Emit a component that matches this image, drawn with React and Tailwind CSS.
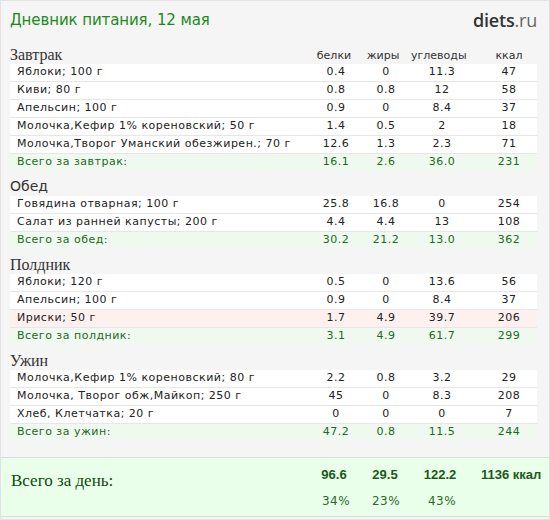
import React from "react";

const sections = [
  {
    title: "Завтрак",
    serif: true,
    rows: [
      ["Яблоки; 100 г", "0.4", "0", "11.3", "47"],
      ["Киви; 80 г", "0.8", "0.8", "12", "58"],
      ["Апельсин; 100 г", "0.9", "0", "8.4", "37"],
      ["Молочка,Кефир 1% кореновский; 50 г", "1.4", "0.5", "2", "18"],
      ["Молочка,Творог Уманский обезжирен.; 70 г", "12.6", "1.3", "2.3", "71"],
    ],
    total: ["Всего за завтрак:", "16.1", "2.6", "36.0", "231"],
  },
  {
    title: "Обед",
    serif: false,
    rows: [
      ["Говядина отварная; 100 г", "25.8", "16.8", "0", "254"],
      ["Салат из ранней капусты; 200 г", "4.4", "4.4", "13", "108"],
    ],
    total: ["Всего за обед:", "30.2", "21.2", "13.0", "362"],
  },
  {
    title: "Полдник",
    serif: true,
    rows: [
      ["Яблоки; 120 г", "0.5", "0", "13.6", "56"],
      ["Апельсин; 100 г", "0.9", "0", "8.4", "37"],
      ["Ириски; 50 г", "1.7", "4.9", "39.7", "206", true],
    ],
    total: ["Всего за полдник:", "3.1", "4.9", "61.7", "299"],
  },
  {
    title: "Ужин",
    serif: true,
    rows: [
      ["Молочка,Кефир 1% кореновский; 80 г", "2.2", "0.8", "3.2", "29"],
      ["Молочка, Творог обж,Майкоп; 250 г", "45", "0", "8.3", "208"],
      ["Хлеб, Клетчатка; 20 г", "0", "0", "0", "7"],
    ],
    total: ["Всего за ужин:", "47.2", "0.8", "11.5", "244"],
  },
];

function Cells({ v }) {
  return (
    <>
      <div className="w-[50px] text-center">{v[1]}</div>
      <div className="w-[50px] text-center">{v[2]}</div>
      <div className="w-[62px] text-center">{v[3]}</div>
      <div className="w-[8px]" />
      <div className="w-[56px] text-center">{v[4]}</div>
    </>
  );
}

function Row({ r }) {
  const pink = r[5];
  return (
    <div
      className={`flex h-[18px] items-center border-b border-[#e6e6e6] ${
        pink ? "bg-[#fff0f0]" : "bg-white"
      } text-[#222]`}
    >
      <div className="flex-1 pl-[7px] whitespace-nowrap">{r[0]}</div>
      <Cells v={r} />
    </div>
  );
}

function Total({ r }) {
  return (
    <div className="flex h-[17px] items-center bg-[#f0f9ef] text-[#1b6a1b]">
      <div className="flex-1 pl-[7px] whitespace-nowrap">{r[0]}</div>
      <Cells v={r} />
    </div>
  );
}

export default function App() {
  return (
    <div
      className="w-[550px] h-[520px] bg-[#f5f5f5] border border-[#e2e2e2] overflow-hidden"
      style={{ fontFamily: "'DejaVu Sans', Verdana, sans-serif" }}
    >
      <div className="flex h-[38px] items-center justify-between pl-[9px] pr-[12px]">
        <div className="text-[15px] text-[#1a8a1a] tracking-[-0.1px] pt-[1px]">
          Дневник питания, 12 мая
        </div>
        <div
          className="text-[18px] text-[#333] tracking-[-0.2px]"
          style={{ fontFamily: "'Open Sans', 'Liberation Sans', sans-serif" }}
        >
          <span className="font-semibold">diets</span>
          <span className="text-[#666]">.ru</span>
        </div>
      </div>
      <div className="pl-[9px] pr-[12px] text-[11px] tracking-[0.5px]">
        {sections.map((s, i) => (
          <div key={i}>
            <div className="flex h-[25px] items-end">
              <div
                className={`flex-1 leading-[18px] text-[#333] tracking-normal ${
                  s.serif ? "text-[16px]" : "text-[14px] pb-[1px]"
                }`}
                style={{
                  fontFamily: s.serif
                    ? "'Liberation Serif', 'Times New Roman', serif"
                    : "'DejaVu Sans', Verdana, sans-serif",
                }}
              >
                {s.title}
              </div>
              {i === 0 && (
                <div className="flex text-[#333] tracking-normal">
                  <div className="w-[50px] text-center pr-[4px]">белки</div>
                  <div className="w-[50px] text-center pr-[6px]">жиры</div>
                  <div className="w-[62px] text-center pr-[10px]">углеводы</div>
                  <div className="w-[8px]" />
                  <div className="w-[56px] text-center">ккал</div>
                </div>
              )}
            </div>
            {s.rows.map((r, j) => (
              <Row key={j} r={r} />
            ))}
            <Total r={s.total} />
          </div>
        ))}
      </div>
      <div className="mt-[16px] h-[60px] bg-[#eaffea] border-y border-[#dcdcdc] flex pl-[10px] pr-[12px]">
        <div
          className="flex-1 pt-[10px] text-[17px] text-[#0a4a0a]"
          style={{ fontFamily: "'Liberation Serif', 'Times New Roman', serif" }}
        >
          Всего за день:
        </div>
        <div className="flex flex-col pt-[8px]">
          <div
            className="flex text-[13px] font-bold text-[#1a5a1a] h-[18px] items-center"
            style={{ fontFamily: "'Liberation Sans', Arial, sans-serif" }}
          >
            <div className="w-[50px] text-center pr-[4px]">96.6</div>
            <div className="w-[50px] text-center pr-[2px]">29.5</div>
            <div className="w-[62px] text-center pr-[4px]">122.2</div>
            <div className="w-[8px]" />
            <div className="w-[56px] text-center whitespace-nowrap">1136 ккал</div>
          </div>
          <div className="flex text-[12px] text-[#2a6a2a] h-[18px] items-center mt-[8px] tracking-[0.5px]">
            <div className="w-[50px] text-center">34%</div>
            <div className="w-[50px] text-center">23%</div>
            <div className="w-[62px] text-center">43%</div>
          </div>
        </div>
      </div>
    </div>
  );
}
